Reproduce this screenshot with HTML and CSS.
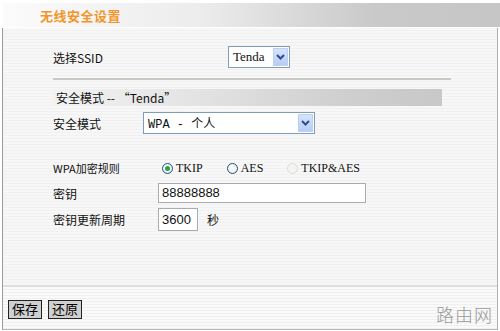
FILE: index.html
```html
<!DOCTYPE html>
<html lang="zh-CN">
<head>
  <meta charset="UTF-8">
  <title>无线安全设置</title>
  <link rel="stylesheet" href="styles.css">
</head>
<body>
  <div class="head">
    <span class="head-title">无线安全设置</span>
  </div>
  <div class="panel">
    <div class="main">
      <div class="row row-ssid">
        <span class="label label-wide">选择SSID</span>
        <div class="select select-ssid">
          <span class="select-text">Tenda</span>
          <span class="select-arrow"><svg width="9" height="6" viewBox="0 0 9 6"><path d="M1 1 L4.5 4.5 L8 1" fill="none" stroke="#2b4f8f" stroke-width="2"/></svg></span>
        </div>
      </div>
      <div class="rule"></div>
      <div class="bar">安全模式 -- “Tenda”</div>
      <div class="row row-mode">
        <span class="label label-mid">安全模式</span>
        <div class="select select-mode">
          <span class="select-text">WPA - 个人</span>
          <span class="select-arrow"><svg width="9" height="6" viewBox="0 0 9 6"><path d="M1 1 L4.5 4.5 L8 1" fill="none" stroke="#2b4f8f" stroke-width="2"/></svg></span>
        </div>
      </div>
      <div class="row row-radio">
        <span class="label label-long">WPA加密规则</span>
        <span class="radio checked"></span><span class="opt">TKIP</span>
        <span class="radio"></span><span class="opt">AES</span>
        <span class="radio disabled"></span><span class="opt">TKIP&amp;AES</span>
      </div>
      <div class="row row-key">
        <span class="label label-long">密钥</span>
        <div class="field field-key">88888888</div>
      </div>
      <div class="row row-period">
        <span class="label label-long">密钥更新周期</span>
        <div class="field field-period">3600</div>
        <span class="unit">秒</span>
      </div>
    </div>
    <div class="foot">
      <div class="buttons">
        <button class="btn">保存</button>
        <button class="btn">还原</button>
      </div>
      <span class="mark">路由网</span>
    </div>
  </div>
</body>
</html>
```

FILE: styles.css
```css
body {
  margin: 0;
  width: 500px;
  height: 331px;
  background: #fff;
  font-family: "Noto Sans CJK SC", "DejaVu Sans", sans-serif;
  font-size: 12px;
  color: #111;
  overflow: hidden;
}
.head {
  height: 24px;
  margin: 3px 0 0 3px;
  padding-left: 37px;
  display: flex;
  align-items: center;
  background: linear-gradient(to right, #fbfbfb 0%, #ececec 40%, #c9c9c9 75%, #c6c6c6 100%);
}
.head-title {
  color: #f2962a;
  font-weight: bold;
  font-size: 13px;
  letter-spacing: 0.5px;
}
.panel {
  margin: 1px 2px 0 2px;
  height: 301px;
  border-left: 1px solid #9a9a9a;
  border-right: 1px solid #b0b0b0;
  border-bottom: 1px solid #b8b8b8;
  display: flex;
  flex-direction: column;
}
.main {
  height: 257px;
  padding-left: 50px;
  background: repeating-linear-gradient(to bottom, #f7f7f7 0, #f7f7f7 2px, #f1f1f1 2px, #f1f1f1 3px);
  border-bottom: 2px solid #dedede;
}
.row {
  display: flex;
  align-items: center;
}
.label {
  flex-shrink: 0;
}
.label-wide { width: 175px; }
.label-mid { width: 90px; }
.label-long { width: 105px; }
.row-ssid {
  margin-top: 18px;
  height: 22px;
}
.select {
  display: flex;
  align-items: center;
  height: 20px;
  background: #fff;
  border: 1px solid #7f9db9;
  font-family: "Liberation Serif", "Noto Sans CJK SC", serif;
  font-size: 13px;
}
.select-text {
  flex: 1;
  padding-left: 4px;
}
.select-ssid { width: 60px; }
.select-mode { width: 170px; font-family: "Liberation Mono", "Noto Sans CJK SC", monospace; font-size: 12px; }
.select-arrow {
  width: 15px;
  height: 18px;
  margin-right: 1px;
  background: linear-gradient(to bottom, #d6e3fb, #b8cdf3);
  border: 1px solid #bcd0f3;
  box-sizing: border-box;
  display: flex;
  align-items: center;
  justify-content: center;
}
.rule {
  width: 398px;
  height: 2px;
  margin-top: 10px;
  background: #c9c9c4;
}
.bar {
  width: 386px;
  height: 17px;
  margin-top: 9px;
  padding-left: 3px;
  line-height: 17px;
  background: linear-gradient(to right, #f2f2f2 0%, #e4e4e4 35%, #cfcfcf 75%, #c8c8c8 100%);
}
.row-mode {
  margin-top: 6px;
  height: 22px;
}
.row-radio {
  margin-top: 24px;
  height: 20px;
  font-size: 11px;
}
.radio {
  width: 11px;
  height: 11px;
  border-radius: 50%;
  border: 1px solid #1d5180;
  background: radial-gradient(circle at 40% 35%, #fff 0%, #e6e6e0 100%);
  margin: 0 3px 0 4px;
  box-sizing: border-box;
  position: relative;
  flex-shrink: 0;
}
.radio.checked::after {
  content: "";
  position: absolute;
  left: 2px;
  top: 2px;
  width: 5px;
  height: 5px;
  border-radius: 50%;
  background: #2fa24a;
}
.radio.disabled {
  border-color: #dcdcd6;
  background: #f4f4f4;
}
.opt {
  font-family: "Liberation Serif", serif;
  font-size: 12px;
  margin-right: 20px;
}
.row-key {
  margin-top: 5px;
  height: 20px;
}
.field {
  height: 18px;
  line-height: 18px;
  background: #fff;
  border: 1px solid #a5acb2;
  padding-left: 3px;
  font-family: "Liberation Sans", sans-serif;
  font-size: 13px;
  box-sizing: content-box;
}
.field-key { width: 203px; }
.row-period {
  margin-top: 5px;
  height: 23px;
}
.field-period {
  width: 35px;
  height: 21px;
  line-height: 21px;
}
.unit {
  margin-left: 9px;
}
.foot {
  flex: 1;
  display: flex;
  align-items: center;
  justify-content: space-between;
  padding: 0 4px 0 5px;
  background: repeating-linear-gradient(to bottom, #fafafa 0, #fafafa 2px, #efefef 2px, #efefef 3px);
}
.buttons {
  display: flex;
  gap: 6px;
  margin-top: 2px;
}
.btn {
  height: 19px;
  width: 34px;
  padding: 0;
  border: 1px solid #222;
  background: #d0d0d0;
  font-family: "Noto Sans CJK SC", sans-serif;
  font-size: 13px;
  line-height: 16px;
  color: #000;
}
.mark {
  font-size: 18px;
  font-weight: 300;
  color: #999;
  letter-spacing: 1px;
  margin-top: 12px;
}
```
